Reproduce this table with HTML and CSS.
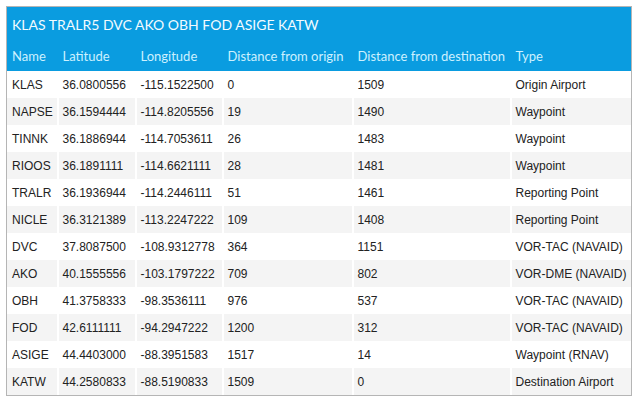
FILE: index.html
```html
<!DOCTYPE html>
<html lang="en">
<head>
    <meta charset="UTF-8">
    <title>Route</title>
    <link rel="stylesheet" href="styles.css">
</head>
<body>
    <table class="route">
        <colgroup>
            <col class="c-name">
            <col class="c-lat">
            <col class="c-lon">
            <col class="c-orig">
            <col class="c-dest">
            <col class="c-type">
        </colgroup>
        <thead>
            <tr class="title"><th colspan="6">KLAS TRALR5 DVC AKO OBH FOD ASIGE KATW</th></tr>
            <tr class="heads">
                <th>Name</th>
                <th>Latitude</th>
                <th>Longitude</th>
                <th>Distance from origin</th>
                <th>Distance from destination</th>
                <th>Type</th>
            </tr>
        </thead>
        <tbody>
            <tr><td>KLAS</td><td>36.0800556</td><td>-115.1522500</td><td>0</td><td>1509</td><td>Origin Airport</td></tr>
            <tr><td>NAPSE</td><td>36.1594444</td><td>-114.8205556</td><td>19</td><td>1490</td><td>Waypoint</td></tr>
            <tr><td>TINNK</td><td>36.1886944</td><td>-114.7053611</td><td>26</td><td>1483</td><td>Waypoint</td></tr>
            <tr><td>RIOOS</td><td>36.1891111</td><td>-114.6621111</td><td>28</td><td>1481</td><td>Waypoint</td></tr>
            <tr><td>TRALR</td><td>36.1936944</td><td>-114.2446111</td><td>51</td><td>1461</td><td>Reporting Point</td></tr>
            <tr><td>NICLE</td><td>36.3121389</td><td>-113.2247222</td><td>109</td><td>1408</td><td>Reporting Point</td></tr>
            <tr><td>DVC</td><td>37.8087500</td><td>-108.9312778</td><td>364</td><td>1151</td><td>VOR-TAC (NAVAID)</td></tr>
            <tr><td>AKO</td><td>40.1555556</td><td>-103.1797222</td><td>709</td><td>802</td><td>VOR-DME (NAVAID)</td></tr>
            <tr><td>OBH</td><td>41.3758333</td><td>-98.3536111</td><td>976</td><td>537</td><td>VOR-TAC (NAVAID)</td></tr>
            <tr><td>FOD</td><td>42.6111111</td><td>-94.2947222</td><td>1200</td><td>312</td><td>VOR-TAC (NAVAID)</td></tr>
            <tr><td>ASIGE</td><td>44.4403000</td><td>-88.3951583</td><td>1517</td><td>14</td><td>Waypoint (RNAV)</td></tr>
            <tr><td>KATW</td><td>44.2580833</td><td>-88.5190833</td><td>1509</td><td>0</td><td>Destination Airport</td></tr>
        </tbody>
    </table>
</body>
</html>
```

FILE: styles.css
```css
body {
    margin: 6px;
    background: #fff;
}
.route {
    width: 625px;
    table-layout: fixed;
    border-collapse: collapse;
    border: 1px solid #b5b5b5;
    font-family: "Liberation Sans", Arial, sans-serif;
    font-size: 12px;
    color: #222;
}
.c-name {width: 50px;}
.c-lat {width: 78px;}
.c-lon {width: 87px;}
.c-orig {width: 130px;}
.c-dest {width: 158px;}
.c-type {width: 122px;}

.route thead {
    background: #0a9ce0;
    font-family: Lato, "Open Sans", sans-serif;
}
.route th {
    text-align: left;
    font-weight: normal;
    padding: 0 0 0 6px;
    white-space: nowrap;
}
.title th {
    height: 34px;
    color: #f2fbff;
    font-size: 14px;
}
.heads th {
    height: 30px;
    color: #cdf1ff;
    font-size: 13px;
}
.route td {
    height: 27px;
    padding: 0 0 0 6px;
    white-space: nowrap;
}
.route th:first-child,
.route td:first-child {padding-left: 5px;}
.route tbody tr:nth-child(even) td {
    background: linear-gradient(to right, #fff 2px, #f4f4f4 2px);
}
.route tbody tr:nth-child(even) td:first-child {background: #f4f4f4;}
```
